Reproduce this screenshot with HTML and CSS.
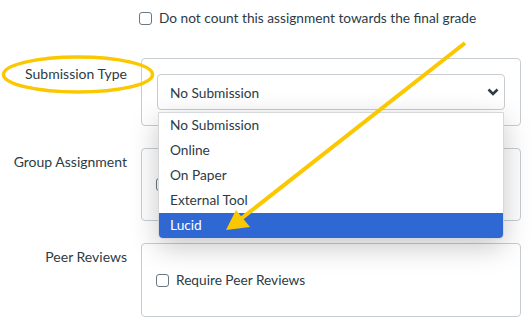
FILE: index.html
```html
<!DOCTYPE html>
<html lang="en">
<head>
  <meta charset="UTF-8" />
  <title>Assignment Options</title>
  <link rel="stylesheet" href="styles.css">
</head>
<body>
  <div class="form">
    <div class="row top-row">
      <div class="label"></div>
      <label class="check grade-check">
        <input type="checkbox"> Do not count this assignment towards the final grade
      </label>
    </div>

    <div class="row">
      <div class="label label-select">Submission Type</div>
      <div class="box submission-box">
        <div class="select">
          <span>No Submission</span>
          <svg class="chevron" width="12" height="8" viewBox="0 0 12 8">
            <path d="M1.5 1.5 L6 6 L10.5 1.5" fill="none" stroke="#2d3b45" stroke-width="2.6" />
          </svg>
        </div>
        <!-- open dropdown list -->
        <ul class="dropdown">
          <li>No Submission</li>
          <li>Online</li>
          <li>On Paper</li>
          <li>External Tool</li>
          <li class="selected">Lucid</li>
        </ul>
      </div>
    </div>

    <div class="row">
      <div class="label">Group Assignment</div>
      <div class="box check-box group-box">
        <!-- its caption sits under the open list -->
        <label class="check"><input type="checkbox"></label>
      </div>
    </div>

    <div class="row">
      <div class="label">Peer Reviews</div>
      <div class="box check-box peer-box">
        <label class="check"><input type="checkbox"> Require Peer Reviews</label>
      </div>
    </div>
  </div>

  <!-- yellow annotation drawn over the form -->
  <svg class="annotation" width="532" height="331" viewBox="0 0 532 331">
    <ellipse cx="78" cy="74.5" rx="74.5" ry="17.5" fill="none" stroke="#fbc800" stroke-width="3.5" />
    <line x1="465" y1="43" x2="242" y2="218" stroke="#fbc800" stroke-width="4" />
    <polygon points="226,230 236,210 250,227" fill="#fbc800" />
  </svg>
</body>
</html>
```

FILE: styles.css
```css
*, *::before, *::after {
  box-sizing: border-box;
}

html, body {
  margin: 0;
  padding: 0;
  height: 100vh;
  overflow: hidden;
}

body {
  background: #ffffff;
  color: #2d3b45;
  font-family: 'Lato', 'Open Sans', sans-serif;
  font-size: 13.7px;
  position: relative;
}

.form {
  display: flex;
  flex-direction: column;
  padding-top: 9px;
}

.row {
  display: flex;
  gap: 14px;
  margin-bottom: 22px;
}

.top-row {
  margin-bottom: 31px;
}

.label {
  width: 127px;
  flex-shrink: 0;
  text-align: right;
  padding-top: 5px;
  font-size: 14px;
  line-height: 18px;
}

.label-select {
  padding-top: 7px;
}

.check {
  display: flex;
  align-items: center;
  gap: 7px;
  line-height: 18px;
  white-space: nowrap;
}

.grade-check {
  margin-left: -2px;
}

.check input {
  appearance: none;
  margin: 0;
  width: 13px;
  height: 13px;
  border: 1px solid #6b7780;
  border-radius: 3px;
  background: #ffffff;
  flex-shrink: 0;
}

/* Bordered field containers */
.box {
  width: 380px;
  border: 1px solid #c7cdd1;
  border-radius: 4px;
  position: relative;
}

.submission-box {
  padding: 15px;
}

.select {
  display: flex;
  align-items: center;
  justify-content: space-between;
  height: 36px;
  padding: 0 5px 0 12px;
  border: 1px solid #c7cdd1;
  border-radius: 4px;
  background: #ffffff;
}

.chevron {
  display: block;
}

.check-box {
  display: flex;
  align-items: center;
  padding: 0 14px;
}

.group-box {
  height: 73px;
}

.peer-box {
  height: 74px;
}

/* Open select list, floating over the next rows */
.dropdown {
  position: absolute;
  left: 16px;
  top: 53px;
  width: 346px;
  margin: 0;
  padding: 0;
  list-style: none;
  background: #ffffff;
  border: 1px solid #d4d8db;
  border-radius: 0 0 5px 5px;
  box-shadow: 0 8px 28px rgba(0, 0, 0, 0.22);
  overflow: hidden;
  z-index: 10;
}

.dropdown li {
  height: 25px;
  line-height: 24px;
  padding-left: 11px;
}

.dropdown .selected {
  background: #2f68d3;
  color: #ffffff;
}

.annotation {
  position: absolute;
  left: 0;
  top: 0;
  z-index: 20;
  pointer-events: none;
}
```
